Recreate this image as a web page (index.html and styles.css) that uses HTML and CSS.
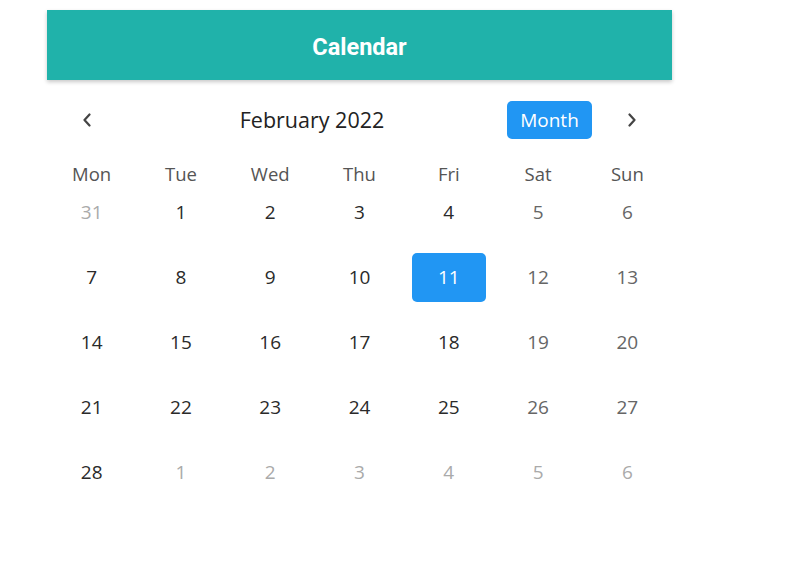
FILE: index.html
```html
<!DOCTYPE html>
<html>
<head>
<meta charset="utf-8">
<link rel="stylesheet" href="styles.css">
</head>
<body>
<div class="calendar">
  <header class="appbar">Calendar</header>
  <div class="nav">
    <button class="nav-btn" aria-label="Previous">
      <svg width="10" height="14" viewBox="0 0 10 14"><path d="M7.5 1.5 L2.5 7 L7.5 12.5" fill="none" stroke="#444" stroke-width="2.2" stroke-linecap="round" stroke-linejoin="round"/></svg>
    </button>
    <div class="title">February 2022</div>
    <button class="month-btn">Month</button>
    <button class="nav-btn" aria-label="Next">
      <svg width="10" height="14" viewBox="0 0 10 14"><path d="M2.5 1.5 L7.5 7 L2.5 12.5" fill="none" stroke="#444" stroke-width="2.2" stroke-linecap="round" stroke-linejoin="round"/></svg>
    </button>
  </div>
  <div class="weekdays">
    <div>Mon</div><div>Tue</div><div>Wed</div><div>Thu</div><div>Fri</div><div>Sat</div><div>Sun</div>
  </div>
  <div class="days">
    <div class="day other">31</div><div class="day">1</div><div class="day">2</div><div class="day">3</div><div class="day">4</div><div class="day weekend">5</div><div class="day weekend">6</div>
    <div class="day">7</div><div class="day">8</div><div class="day">9</div><div class="day">10</div><div class="day selected">11</div><div class="day weekend">12</div><div class="day weekend">13</div>
    <div class="day">14</div><div class="day">15</div><div class="day">16</div><div class="day">17</div><div class="day">18</div><div class="day weekend">19</div><div class="day weekend">20</div>
    <div class="day">21</div><div class="day">22</div><div class="day">23</div><div class="day">24</div><div class="day">25</div><div class="day weekend">26</div><div class="day weekend">27</div>
    <div class="day">28</div><div class="day other">1</div><div class="day other">2</div><div class="day other">3</div><div class="day other">4</div><div class="day other">5</div><div class="day other">6</div>
  </div>
</div>
</body>
</html>
```
FILE: styles.css
```css
html, body {
  margin: 0;
  padding: 0;
  background: #ffffff;
}
body {
  font-family: "Open Sans", "Noto Sans", sans-serif;
  color: #222;
}
.calendar {
  width: 625px;
  margin: 10px 0 0 47px;
}
.appbar {
  height: 70px;
  box-sizing: border-box;
  padding-top: 3px;
  background: #20b2aa;
  color: #ffffff;
  font-family: Roboto, "Liberation Sans", sans-serif;
  font-weight: 700;
  font-size: 23.5px;
  display: flex;
  align-items: center;
  justify-content: center;
  box-shadow: 0 2px 4px rgba(0, 0, 0, 0.22);
}
.nav {
  display: flex;
  align-items: center;
  height: 40px;
  margin-top: 20px;
}
.nav-btn {
  width: 80px;
  height: 40px;
  border: 0;
  background: none;
  padding: 0;
  display: flex;
  align-items: center;
  justify-content: center;
}
.title {
  flex: 1;
  text-align: center;
  font-size: 21.5px;
  color: #222;
  padding: 0 10px 2px 0;
}
.month-btn {
  width: 85px;
  height: 38px;
  border: 0;
  border-radius: 5px;
  background: #2196f3;
  color: #ffffff;
  font-family: "Open Sans", "Noto Sans", sans-serif;
  font-size: 19px;
  padding: 0 0 1px;
}
.weekdays {
  display: grid;
  grid-template-columns: repeat(7, 1fr);
  height: 28px;
  margin-top: 20px;
  align-items: center;
  text-align: center;
  font-size: 18.5px;
  color: #555;
}
.weekdays div {
  padding-bottom: 2px;
}
.days {
  display: grid;
  grid-template-columns: repeat(7, 1fr);
  grid-auto-rows: 49px;
  row-gap: 16px;
}
.day {
  margin: 0 7.5px;
  padding-bottom: 2px;
  display: flex;
  align-items: center;
  justify-content: center;
  font-size: 19px;
  color: #2a2a2a;
  border-radius: 5px;
}
.day.weekend {
  color: #666;
}
.day.other {
  color: #aaa;
}
.day.selected {
  background: #2196f3;
  color: #ffffff;
}
```
